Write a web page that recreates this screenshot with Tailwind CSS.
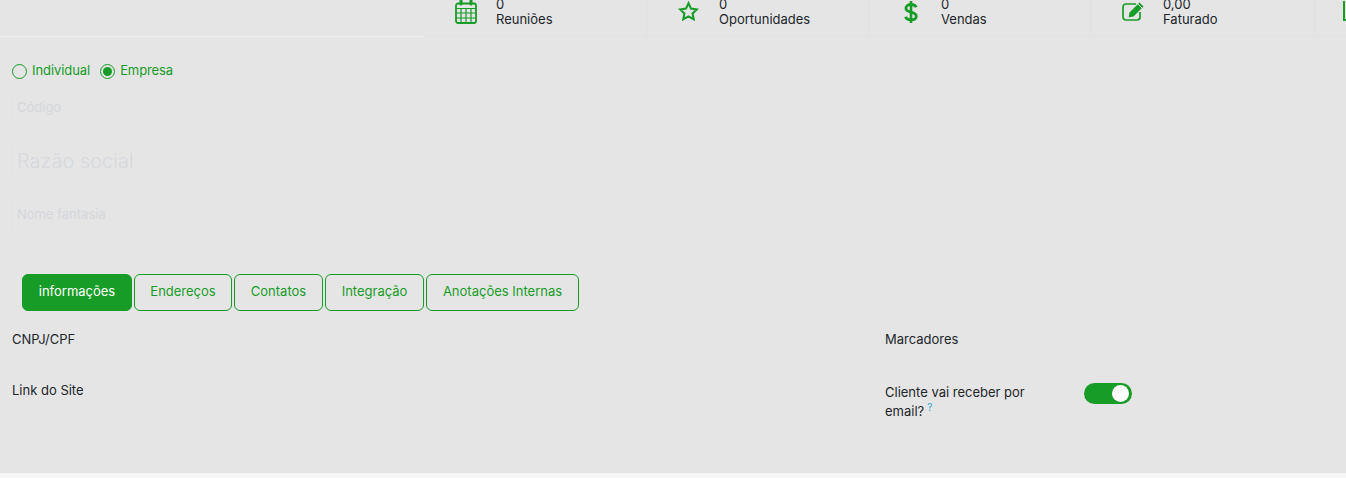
<!DOCTYPE html>
<html lang="en">
<head>
    <meta charset="UTF-8">
    <title>Cliente</title>
    <script src="https://cdn.jsdelivr.net/npm/@tailwindcss/browser@4"></script>
</head>
<body class="bg-[#f5f5f5] h-[478px] overflow-hidden font-['Inter',sans-serif] text-[13px] text-[#212529]">
    <div class="bg-[#e5e5e5] h-[473px] overflow-hidden">
        <!-- top stats -->
        <div class="flex h-[37px] overflow-hidden">
            <div class="w-[424px] shrink-0 border-b border-[#f0f0f0]"></div>
            <div class="flex flex-1 border-b border-[#dfe3e8]">
                <div class="w-[223px] shrink-0 flex border-r border-[#e0e0e2]">
                    <div class="w-[72px] pl-[31px]">
                        <svg class="w-[22px] h-[24px]" viewBox="0 0 22 24" fill="none" stroke="#179c27" stroke-width="1.8"><rect x="1" y="3.5" width="20" height="19.5" rx="2"/><path d="M1 8.5h20M1 13h20M1 18h20M6 8.5V23M11 8.5V23M16 8.5V23" stroke-width="1.2"/><path d="M6 0v4M16 0v4" stroke-width="3" stroke-linecap="round"/></svg>
                    </div>
                    <div class="-mt-[3px] leading-[15px]"><div>0</div><div>Reuniões</div></div>
                </div>
                <div class="w-[222px] shrink-0 flex border-r border-[#e0e0e2]">
                    <div class="w-[72px] pl-[31px] pt-[1px]">
                        <svg class="w-[21px] h-[20px]" viewBox="0 0 24 23" fill="none" stroke="#179c27" stroke-width="2.4"><path d="M12 2.6l2.9 6.2 6.7.9-4.900 4.600 1.300 6.700-6-3.300-6 3.300 1.300-6.700-4.900-4.600 6.700-.9z"/></svg>
                    </div>
                    <div class="-mt-[3px] leading-[15px]"><div>0</div><div>Oportunidades</div></div>
                </div>
                <div class="w-[222px] shrink-0 flex border-r border-[#e0e0e2]">
                    <div class="w-[72px] pl-[35px]">
                        <svg class="w-[14px] h-[24px]" viewBox="0 0 14 24" fill="none" stroke="#179c27" stroke-width="2.8"><path d="M12.2 7.200C11.500 5.400 9.500 4.500 7 4.500 4 4.500 1.900 6 1.900 8.300c0 5.200 10.400 2.600 10.400 7.900 0 2.300-2.300 3.600-5.300 3.600-2.700 0-4.800-1-5.500-3"/><path d="M7 1v22" stroke-width="2.600"/></svg>
                    </div>
                    <div class="-mt-[3px] leading-[15px]"><div>0</div><div>Vendas</div></div>
                </div>
                <div class="w-[224px] shrink-0 flex border-r border-[#e0e0e2]">
                    <div class="w-[72px] pl-[31px] pt-[1px]">
                        <svg class="w-[23px] h-[20px]" viewBox="0 0 23 20" fill="none"><path d="M18 11v5a3 3 0 0 1-3 3H4a3 3 0 0 1-3-3V6a3 3 0 0 1 3-3h10" stroke="#179c27" stroke-width="1.700"/><path d="M7.500 11.500 17.500 1.500l4 4-10 10-4.800.8z" fill="#179c27"/><path d="M16 3l4 4" stroke="#e5e5e5"/></svg>
                    </div>
                    <div class="-mt-[3px] leading-[15px]"><div>0,00</div><div>Faturado</div></div>
                </div>
                <div class="flex-1 pl-[28px] pt-[1px]">
                    <div class="w-[10px] h-[20px] border-l-2 border-b-2 border-[#179c27]"></div>
                </div>
            </div>
        </div>

        <div class="px-[12px]">
            <!-- tipo -->
            <div class="flex items-center mt-[26px] text-[#179c27] h-[16px]">
                <span class="w-[15px] h-[15px] rounded-full border border-[#179c27] mr-[5px]"></span>
                <span class="mr-[10px] tracking-[-0.005em]">Individual</span>
                <span class="w-[15px] h-[15px] rounded-full border border-[#179c27] mr-[5px] flex items-center justify-center"><span class="w-[9px] h-[9px] rounded-full bg-[#179c27]"></span></span>
                <span class="tracking-[-0.01em]">Empresa</span>
            </div>

            <!-- campos -->
            <div class="mt-[10px] h-[38px] pl-[5px] flex items-center border border-[#e3e3e6] rounded-[4px] text-[#d4d7dc] -ml-[1px]">Código</div>
            <div class="mt-[13px] h-[39px] pl-[5px] pt-[2px] flex items-center border border-[#e3e3e7] rounded-[4px] text-[#d6d9dd] text-[20px] font-light -ml-[1px]">Razão social</div>
            <div class="mt-[16px] h-[39px] pl-[5px] flex items-center border border-[#e3e3e6] rounded-[4px] text-[#d4d7dc] -ml-[1px]">Nome fantasia</div>

            <!-- abas -->
            <div class="flex gap-[2px] mt-[40px] ml-[10px] text-[#179c27]">
                <div class="h-[37px] w-[110px] pb-[1px] flex items-center justify-center rounded-[6px] bg-[#179c27] text-white border border-[#179c27]">informações</div>
                <div class="h-[37px] w-[98px] pb-[1px] flex items-center justify-center rounded-[6px] border border-[#179c27]">Endereços</div>
                <div class="h-[37px] w-[89px] pb-[1px] flex items-center justify-center rounded-[6px] border border-[#179c27]">Contatos</div>
                <div class="h-[37px] w-[99px] pb-[1px] flex items-center justify-center rounded-[6px] border border-[#179c27]">Integração</div>
                <div class="h-[37px] w-[153px] pb-[1px] flex items-center justify-center rounded-[6px] border border-[#179c27]">Anotações Internas</div>
            </div>

            <!-- dados -->
            <div class="grid grid-cols-[873px_1fr] mt-[20px]">
                <div>
                    <div class="h-[16px] leading-[16px]">CNPJ/CPF</div>
                    <div class="h-[16px] leading-[16px] mt-[35px]">Link do Site</div>
                </div>
                <div>
                    <div class="h-[16px] leading-[16px]">Marcadores</div>
                    <div class="flex mt-[36px]">
                        <div class="w-[199px] pr-[50px] leading-[19px]">Cliente vai receber por email?<sup class="text-[10px] text-[#36a3d9] ml-[3px]">?</sup></div>
                        <div class="w-[48px] h-[21px] rounded-full bg-[#179c27] flex items-center justify-end pr-[3px]"><span class="w-[17px] h-[17px] rounded-full bg-white"></span></div>
                    </div>
                </div>
            </div>
        </div>
    </div>
</body>
</html>
